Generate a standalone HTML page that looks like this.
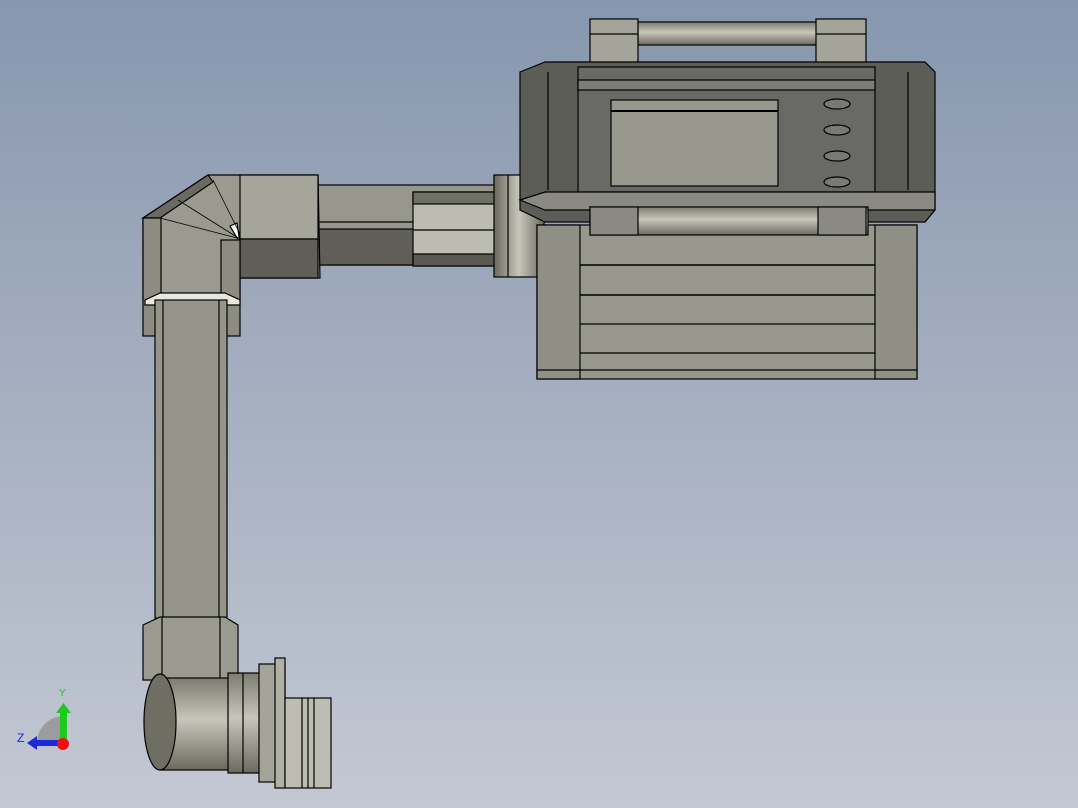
<!DOCTYPE html>
<html><head><style>
html,body{margin:0;padding:0;width:1078px;height:808px;overflow:hidden}
body{background:linear-gradient(#8797ae 0%,#a3adbf 45%,#c3c8d3 100%)}
svg{position:absolute;left:0;top:0}
</style></head><body>
<svg width="1078" height="808" viewBox="0 0 1078 808" stroke="#000" stroke-width="1.2">
<defs>
<linearGradient id="cylV" x1="0" y1="0" x2="0" y2="1"><stop offset="0" stop-color="#7d7c70"/><stop offset=".45" stop-color="#c6c6bb"/><stop offset="1" stop-color="#6b6a5f"/></linearGradient>
<linearGradient id="cylH" x1="0" y1="0" x2="1" y2="0"><stop offset="0" stop-color="#6b6a5f"/><stop offset=".5" stop-color="#c6c6bb"/><stop offset="1" stop-color="#6b6a5f"/></linearGradient>
</defs>
<!-- horizontal pipe -->
<rect x="318" y="185" width="185" height="80" fill="#97978e"/>
<rect x="318" y="229" width="185" height="36" fill="#5f5f57"/>
<line x1="318" y1="222" x2="503" y2="222"/>
<!-- nut -->
<rect x="413" y="192" width="82" height="74" fill="#bcbcb2"/>
<rect x="413" y="192" width="82" height="12" fill="#6f6f66"/>
<rect x="413" y="254" width="82" height="12" fill="#5a5a52"/>
<line x1="413" y1="230" x2="495" y2="230"/>
<!-- flange to box -->
<rect x="494" y="175" width="50" height="102" fill="url(#cylH)"/>
<line x1="508" y1="175" x2="508" y2="277"/>
<!-- elbow top -->
<path d="M143 218 L208 175 L318 175 L320 278 L240 278 L240 300 L143 300 Z" fill="#9a9a91"/>
<path d="M143 218 L208 175 L213 182 L160 218 Z" fill="#6a6a62"/>
<rect x="240" y="175" width="78" height="64" fill="#a5a59c"/>
<rect x="240" y="239" width="78" height="39" fill="#5f5f57"/>
<path d="M230 226 L237 223 L240 243 Z" fill="#fff"/>
<path d="M160 218 L237 238 M178 200 L240 239 M213 180 L240 234" fill="none" stroke-width=".8"/>
<rect x="143" y="218" width="18" height="118" fill="#8c8c83"/>
<rect x="221" y="240" width="19" height="96" fill="#8c8c83"/>
<path d="M145 300 L160 293 L225 293 L240 300 L240 305 L145 305Z" fill="#e8e8e0"/>
<!-- vertical pipe -->
<rect x="155" y="300" width="72" height="318" fill="#95958c"/>
<line x1="163" y1="300" x2="163" y2="618"/><line x1="219" y1="300" x2="219" y2="618"/>
<!-- bottom elbow -->
<path d="M143 625 L160 617 L225 617 L238 625 L238 680 L143 680Z" fill="#9a9a91"/>
<line x1="162" y1="617" x2="162" y2="680"/><line x1="220" y1="617" x2="220" y2="680"/>
<rect x="160" y="678" width="72" height="92" fill="url(#cylV)"/>
<ellipse cx="160" cy="722" rx="16" ry="48" fill="#6f6e62"/>
<rect x="228" y="673" width="34" height="100" fill="url(#cylV)"/>
<line x1="243" y1="673" x2="243" y2="773"/>
<rect x="259" y="664" width="26" height="118" fill="#a4a49a"/>
<rect x="275" y="658" width="10" height="130" fill="#b0b0a6"/>
<rect x="285" y="698" width="46" height="90" fill="#bdbdb3"/>
<line x1="302" y1="698" x2="302" y2="788"/><line x1="308" y1="698" x2="308" y2="788"/><line x1="314" y1="698" x2="314" y2="788"/>
<!-- box lower body -->
<rect x="537" y="225" width="380" height="154" fill="#97978e"/>
<rect x="537" y="225" width="43" height="154" fill="#8f8f86"/>
<rect x="875" y="225" width="42" height="154" fill="#8f8f86"/>
<line x1="580" y1="265" x2="875" y2="265" stroke-width="1.6"/>
<line x1="580" y1="295" x2="875" y2="295" stroke-width="1.6"/>
<line x1="580" y1="324" x2="875" y2="324"/>
<line x1="580" y1="353" x2="875" y2="353"/>
<line x1="537" y1="370" x2="917" y2="370"/>
<!-- handle top -->
<rect x="638" y="22" width="180" height="23" fill="url(#cylV)"/>
<rect x="590" y="19" width="48" height="44" fill="#a4a49a"/>
<rect x="816" y="19" width="50" height="44" fill="#a4a49a"/>
<line x1="590" y1="34" x2="638" y2="34"/><line x1="816" y1="34" x2="866" y2="34"/>
<!-- dark top box -->
<path d="M520 72 L545 62 L925 62 L935 72 L935 210 L925 222 L545 222 L520 210Z" fill="#5d5d58"/>
<rect x="578" y="67" width="297" height="125" fill="#696965"/>
<rect x="578" y="80" width="297" height="10" fill="#7d7d78"/>
<rect x="611" y="100" width="167" height="86" fill="#97978e"/>
<line x1="611" y1="111" x2="778" y2="111" stroke-width="2"/>
<g fill="#7a7a74"><ellipse cx="837" cy="104" rx="13" ry="5"/><ellipse cx="837" cy="130" rx="13" ry="5"/><ellipse cx="837" cy="156" rx="13" ry="5"/><ellipse cx="837" cy="182" rx="13" ry="5"/></g>
<line x1="548" y1="72" x2="548" y2="190"/><line x1="908" y1="72" x2="908" y2="190"/>
<path d="M520 200 L545 192 L935 192 L935 210 L545 210Z" fill="#8a8a82"/>
<!-- lower rod -->
<rect x="590" y="207" width="278" height="28" fill="url(#cylV)"/>
<rect x="590" y="207" width="48" height="28" fill="#8a8a82"/>
<rect x="818" y="207" width="48" height="28" fill="#8a8a82"/>
</svg>
<div style="position:absolute;left:17px;top:731px;color:#1a2ad8;font:12px 'Liberation Sans',sans-serif">Z</div>
<div style="position:absolute;left:59px;top:688px;color:#1ec81e;font:10px 'Liberation Sans',sans-serif">Y</div>
<svg width="80" height="80" style="left:20px;top:690px">
<path d="M17 53 A27 27 0 0 1 44 26 L44 53Z" fill="#9a9c9e"/>
<rect x="40" y="22" width="7" height="30" fill="#1ec81e"/><path d="M36 23 L43.5 13 L51 23Z" fill="#1ec81e"/>
<rect x="16" y="50" width="28" height="6" fill="#1a2ad8"/><path d="M17 46 L7 53 L17 60Z" fill="#1a2ad8"/>
<circle cx="43" cy="54" r="6" fill="#f01010"/>
</svg>
</body></html>
